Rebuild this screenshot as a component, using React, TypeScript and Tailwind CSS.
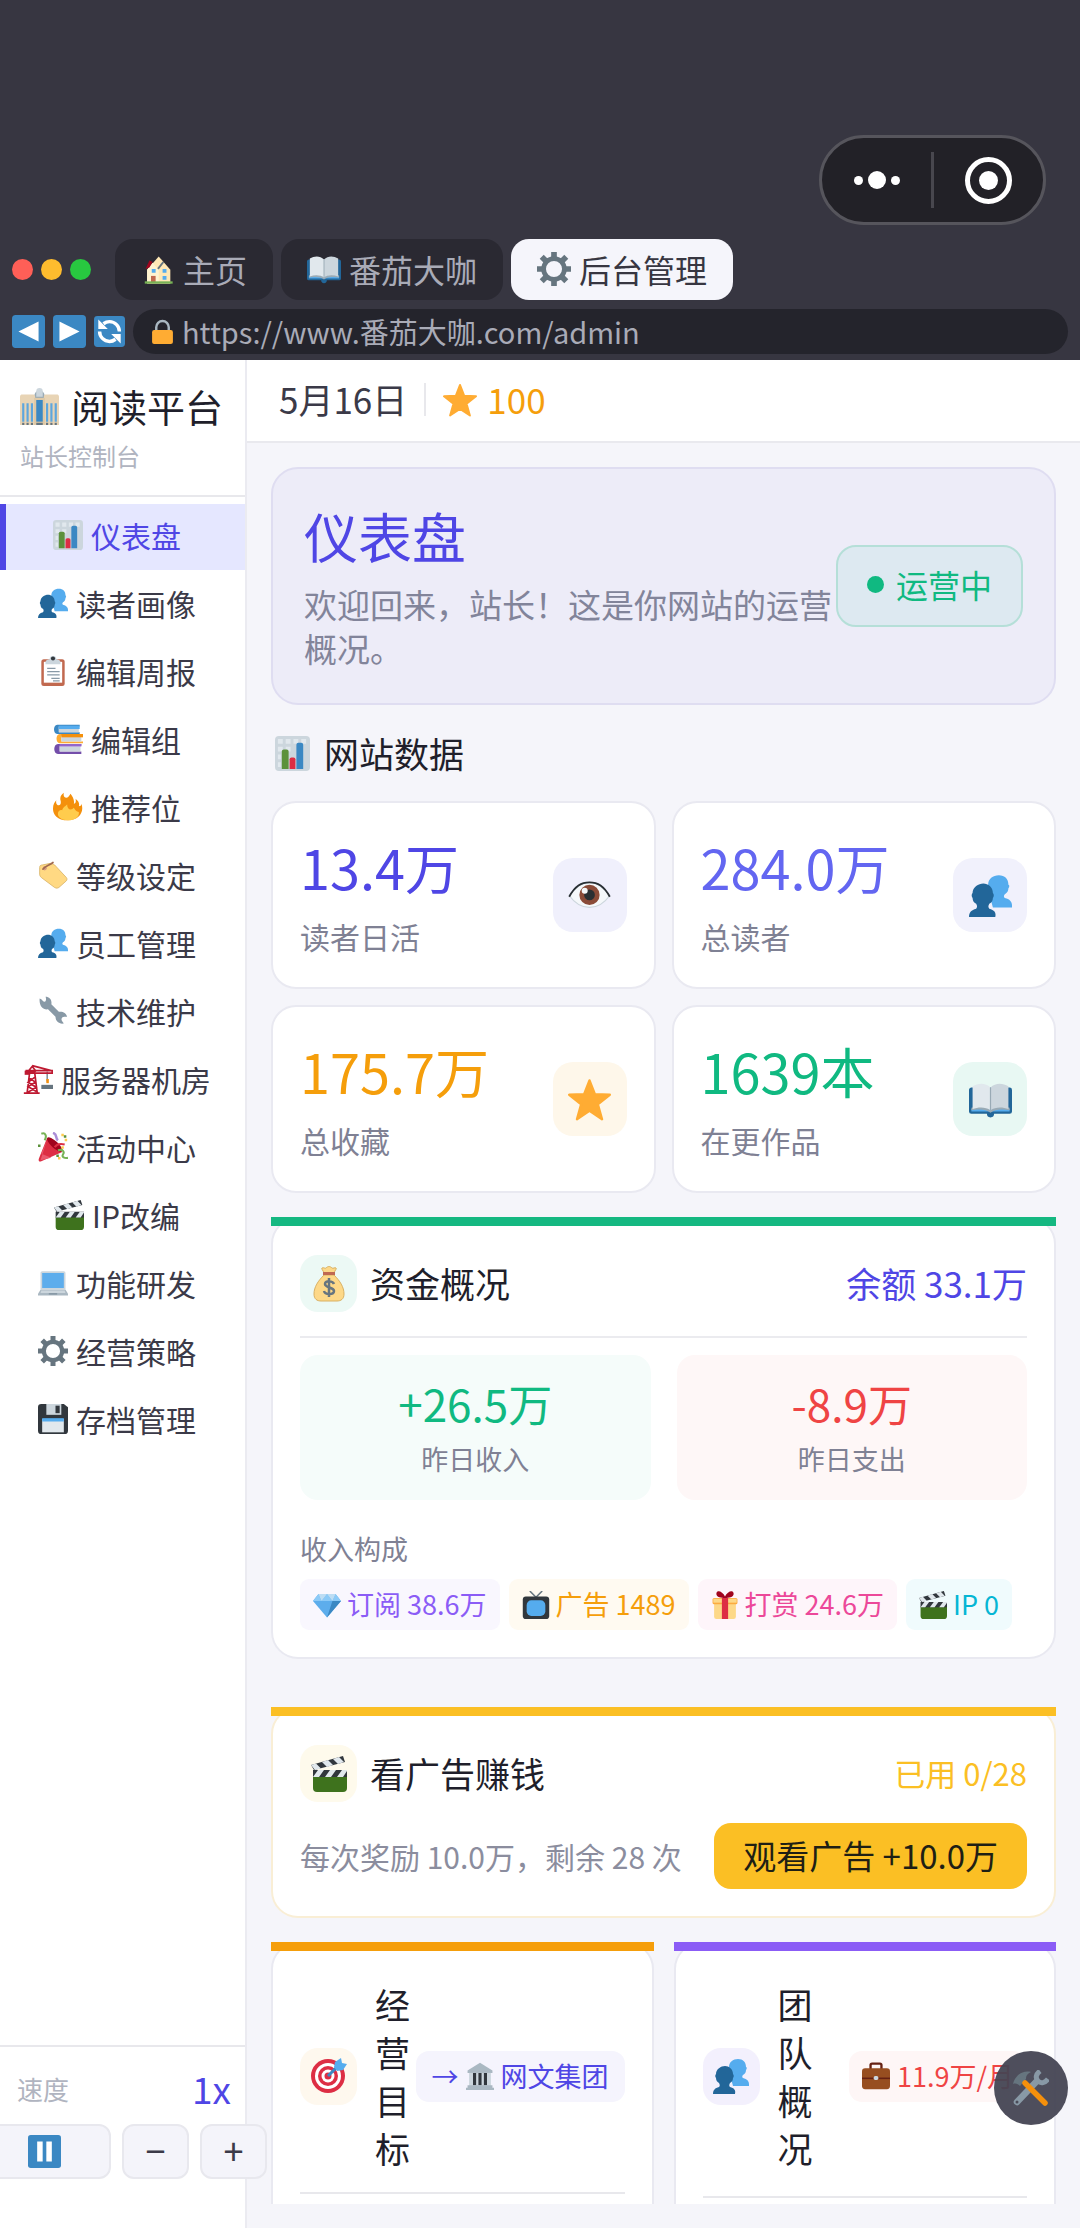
import type { ReactNode } from "react";

const ICONS: Record<string, ReactNode> = {
  house: (
    <g transform="translate(4 4) scale(.82)">
      <path fill="#ffe8b6" d="M3 18 18 1l15 17v18H3z" />
      <path fill="#fff3d0" d="M3 18 10 9l8 9v16H3z" />
      <path fill="none" stroke="#66757f" strokeWidth="2.500" d="m17 17 7-9" />
      <path fill="#a0041e" d="m1 17 5-11 4 2-4 7z" />
      <path fill="#c1694f" d="M8 26h6v8H8z" />
      <path fill="#55acee" d="M9 17h5v5H9zM23 17h5v5h-5zM23 26h5v5h-5z" />
      <path fill="#77b255" d="M0 33h36v3H0z" />
    </g>
  ),
  book: (
    <>
      <path fill="#226699" d="M2 8h32a2 2 0 0 1 2 2v18a2 2 0 0 1-2 2H21a3 3 0 0 1-6 0H2a2 2 0 0 1-2-2V10c0-1 1-2 2-2z" />
      <path fill="#55acee" d="M2 26h32v2H2z" />
      <path fill="#99aab5" d="M2 25c6-2 12-2 16 2 4-4 10-4 16-2v2c-6-1-12-1-16 2-4-3-10-3-16-2z" />
      <path fill="#e1e8ed" d="M18 8C14 4 8 4 3 7v19c5-2 11-2 15 1z" />
      <path fill="#ccd6dd" d="M18 8c4-4 10-4 15-1v19c-5-2-11-2-15 1z" />
      <path fill="none" stroke="#99aab5" d="M18 8v19" />
    </>
  ),
  gear: (
    <g fill="none" stroke="#66757f">
      <circle cx="18" cy="18" r="11" strokeWidth="5" />
      <path
        strokeWidth="6"
        d="M18 6V0M18 30v6M6 18H0M30 18h6M9.500 9.500 5 5M26.500 26.500 31 31M26.500 9.500 31 5M9.500 26.500 5 31"
      />
    </g>
  ),
  back: (
    <>
      <rect width="36" height="36" rx="4" fill="#3b88c3" />
      <path fill="#fff" d="M29 7v22L7 18z" />
    </>
  ),
  forward: (
    <>
      <rect width="36" height="36" rx="4" fill="#3b88c3" />
      <path fill="#fff" d="M7 7v22l22-11z" />
    </>
  ),
  reload: (
    <>
      <rect width="36" height="36" rx="4" fill="#3b88c3" />
      <path
        fill="none"
        stroke="#fff"
        strokeWidth="4"
        d="M6.500 18c0 6 5 11.500 11.500 11.500 2.500 0 5-1 7-2.500M29.500 18c0-6-5-11.500-11.500-11.500-2.500 0-5 1-7 2.500"
      />
      <path fill="#fff" d="M5 4v11h11zM31 32V21H20z" />
    </>
  ),
  lock: (
    <>
      <path fill="none" stroke="#aab8c2" strokeWidth="3.500" d="M9 18v-6a9 9 0 0 1 18 0v6" />
      <rect x="3" y="16" width="30" height="20" rx="3" fill="#ffac33" />
    </>
  ),
  office: (
    <>
      <path fill="#99aab5" d="M13 9a5 6 0 0 1 10 0v5H13z" />
      <path fill="#ccd6dd" d="M15 4a3 3 0 0 1 6 0v5h-6z" />
      <path fill="#e8d4b5" d="M0 9c0-1.500 1-2 2-2h10c1 0 2 .5 2 2v26H0zM22 9c0-1.500 1-2 2-2h10c1 0 2 .5 2 2v26H22z" />
      <path fill="#dfc9a6" d="M13 10h10v25H13z" />
      <path fill="#5da6dd" d="M2 15h2v17H2zM6 15h2v17H6zM10 15h2v17h-2zM24 15h2v17h-2zM28 15h2v17h-2zM32 15h2v17h-2z" />
      <path fill="#3b88c3" d="M15 12h6v20h-6z" />
      <path fill="#66757f" d="M2 33h2v2H2zM6 33h2v2H6zM10 33h2v2h-2zM15 33h6v2h-6zM24 33h2v2h-2zM28 33h2v2h-2zM32 33h2v2h-2z" />
    </>
  ),
  chart: (
    <>
      <rect width="36" height="36" rx="4" fill="#ccd6dd" />
      <path fill="#e1e8ed" d="M3 3h5v5H3zM11 3h5v5h-5zM19 3h5v5h-5zM27 3h5v5h-5zM3 11h5v5H3zM11 11h5v5h-5zM3 19h3v5H3zM3 27h3v5H3z" />
      <path fill="#5c913b" d="M7 16a2 2 0 0 1 2-2h3a2 2 0 0 1 2 2v18H7z" />
      <path fill="#dd2e44" d="M15 24a2 2 0 0 1 2-2h2a2 2 0 0 1 2 2v10h-6z" />
      <path fill="#3b88c3" d="M22 9a2 2 0 0 1 2-2h3a2 2 0 0 1 2 2v25h-7z" />
    </>
  ),
  people: (
    <>
      <path fill="#55acee" d="M36 26c0-3-2-5-6-6-1-.5-1-2 0-3 2-1 3-3 3-5 1-1 1-3 0-3 0-5-3-8-8-8s-9 3-9 8c-1 1 0 3 0 4l4 15h16z" />
      <path fill="#226699" d="M22 36c1-4-1-6-5-7-1-1-1-2 0-4 2-1 3-3 3-5 1-1 1-3 0-4 0-5-4-8-8-8s-9 3-9 8c-1 1-1 3 0 4 0 2 1 4 3 5 1 2 1 3 0 4-4 1-6 3-6 7z" />
    </>
  ),
  clipboard: (
    <>
      <rect x="4" y="4" width="28" height="32" rx="3" fill="#c1694f" />
      <path fill="#fff" d="M7 7h22v25H7z" />
      <path fill="#ccd6dd" d="M9 8c0-3 3-4 5-4a4 4 0 0 1 8 0c2 0 5 1 5 4v2H9z" />
      <circle cx="18" cy="3" r="2.500" fill="#31373d" />
      <path fill="#8899a6" d="M11 14h10v1.500H11zM11 18h15v1.500H11zM11 22h15v1.500H11zM16 26h10v1.500H16zM18 29h8v1.500h-8z" />
    </>
  ),
  books: (
    <>
      <path fill="#3b88c3" d="M5 1h27v2H7v7h25v2H5C0 12 0 1 5 1z" />
      <path fill="#ccd6dd" d="M7 3h24v7H7z" />
      <path fill="#55acee" d="M7 2h25v4H7z" />
      <path fill="#ffac33" d="M8 12h28v2H10v7h26v2H8c-5 0-5-11 0-11z" />
      <path fill="#ccd6dd" d="M10 14h24v7H10z" />
      <path fill="#f4900c" d="M10 12h26v4H10z" />
      <path fill="#744eaa" d="M6 24h28v2H8v7h26v3H6c-6 0-6-12 0-12z" />
      <path fill="#ccd6dd" d="M8 27h25v6H8z" />
      <path fill="#9266cc" d="M8 24h26v3H8z" />
    </>
  ),
  fire: (
    <>
      <path fill="#f4900c" d="M0 20c0-5 2-8 4-10-1 4 1 6 3 6s3-3 2-6c-1-4 1-7 4-9-1 4 1 6 3 6s3-2 5-5c3 4 5 8 4 12 2 0 3-3 2-6 4 3 5 6 4 9 2 0 3-1 3-3 4 10-3 20-16 20S0 27 0 20z" />
      <path fill="#ffcc4d" d="M6 25c1-3 3-4 5-3 1-4 4-5 6-7 0 4 2 6 4 6s3-1 4-2c2 3 3 5 6 5 1 6-5 10-13 10S5 30 6 25z" />
    </>
  ),
  tag: (
    <>
      <path fill="#ffd983" stroke="#d9b367" d="M2 9c0-2 1-3 3-3l10-2c2 0 3 1 5 2l14 15c1 1 1 3 0 4l-9 8c-2 1-3 1-5 0L4 21c-1-1-2-2-2-4z" />
      <circle cx="8" cy="10" r="2.500" fill="#d99e82" />
      <path fill="none" stroke="#a0694f" strokeWidth="2" strokeLinecap="round" d="M6 11C8 7 13 7 18 3" />
    </>
  ),
  wrench: (
    <path fill="#8899a6" d="M2 3c3 1 4 4 6 4 2-1 2-4 1-6 5 0 8 4 7 9l9 9c4-1 9 1 10 6-2 0-4-1-6 1-2 2 0 4 2 7-5 1-10-2-10-8l-9-9C6 17 1 12 2 3z" />
  ),
  crane: (
    <>
      <path fill="#66757f" d="M22 25h14v5H22z" />
      <path fill="none" stroke="#66757f" strokeWidth="1.500" d="M29 9v12" />
      <path fill="#f4900c" d="M28 18h3v5h-3z" />
      <path
        fill="none"
        stroke="#be1931"
        strokeWidth="2"
        d="M4 8h31v3H4zM6 9l5-6 5 6M11 2l23 6M5 34 8 10h6l3 24M7 16l8 6-9 5 10 6M14 16l-8 6 10 6-10 6M1 35h19"
      />
      <path fill="#be1931" d="M2 8h6v5H2z" />
    </>
  ),
  party: (
    <>
      <path fill="#dd2e44" d="M11 7c6 4 13 10 18 17L4 35c-2 1-4 0-3-3z" />
      <path fill="#ea596e" d="m11 9-7 17 12 5L3 34z" />
      <ellipse cx="20" cy="15" rx="4" ry="12" fill="#a0041e" transform="rotate(-47 20 15)" />
      <path fill="none" stroke="#77b255" strokeWidth="2.500" d="M4 2c5-2 7 3 4 8M24 22c6-2 8 2 6 5s2 5 6 4" />
      <path fill="none" stroke="#aa8ed6" strokeWidth="3" d="M18 1c6 2 2 6 6 9" />
      <path fill="none" stroke="#dd2e44" strokeWidth="2.500" d="M20 18c3-4 8-4 12-3" />
      <path fill="#ffcc4d" d="M28 2h3v3h-3zM32 8h3v3h-3zM28 17h3v3h-3zM24 30h3v3h-3z" />
      <path fill="#5c913b" d="M31 4h3v3h-3zM22 27h3v3h-3zM0 15h3v3H0z" />
    </>
  ),
  clapper: (
    <>
      <path fill="#3e721d" d="M2 20h34v12a4 4 0 0 1-4 4H6a4 4 0 0 1-4-4z" />
      <path fill="#31373d" d="M2 14h34v7H2zM0 9 32 0l2 6L3 14z" />
      <path fill="#e1e8ed" d="m7 14-5 7h6l5-7zM19 14l-5 7h6l5-7zM31 14l-5 7h6l4-6v-1zM0 9l5-1.500 5 5-6 1.500zM11 6l6-2 5 5-6 2zM22 3l6-2 5 5-6 2z" />
    </>
  ),
  laptop: (
    <>
      <path fill="#ccd6dd" d="M5 4h26a2 2 0 0 1 2 2v20H3V6c0-1 1-2 2-2z" />
      <path fill="#5dadec" d="M5 6h26v18H5z" />
      <path fill="#aab8c2" d="M3 26h30l3 5v2H0v-2z" />
      <path fill="#ccd6dd" d="M4 27h28l1 3H3z" />
      <path fill="#8899a6" d="M13 30h10v2H13z" />
    </>
  ),
  floppy: (
    <>
      <path fill="#31373d" d="M4 0h27l5 4v28a4 4 0 0 1-4 4H4a4 4 0 0 1-4-4V4a4 4 0 0 1 4-4z" />
      <path fill="#ccd6dd" d="M10 0h18v13H10z" />
      <path fill="#31373d" d="M21 2h5v9h-5z" />
      <path fill="#e1e8ed" d="M5 18h26v16H5z" />
      <path fill="#55acee" d="M5 17h26v4H5z" />
    </>
  ),
  star: (
    <path
      fill="#ffac33"
      stroke="#ffac33"
      strokeWidth="2"
      strokeLinejoin="round"
      d="m18 2 4.500 11.500L35 14l-10 8 3.500 12.500L18 27.500 7.500 34.500 11 22 1 14l12.500-.5z"
    />
  ),
  eye: (
    <>
      <path fill="#f5f8fa" stroke="#ccd6dd" d="M1 18c6-8 11-11 17-11s11 3 17 11c-5 7-11 10-17 10S6 25 1 18z" />
      <circle cx="18" cy="17.500" r="8.500" fill="#8a4b38" />
      <circle cx="18" cy="17.500" r="4.500" fill="#292f33" />
      <circle cx="14" cy="14" r="2.500" fill="#f5f8fa" />
      <path fill="none" stroke="#292f33" strokeWidth="1.500" d="M1 19C6 10 11 7 18 7s12 3 17 12" />
    </>
  ),
  money: (
    <>
      <path fill="#fdd888" stroke="#d9b062" d="M13 9h10c6 6 10 12 10 19 0 5-3 7-7 7H10c-4 0-7-2-7-7 0-7 4-13 10-19z" />
      <path fill="#fdd888" stroke="#d9b062" d="M13 7c-1-3-3-4-2-5 2-1 3 1 4 0 2-2 4-2 6 0 1 1 3-1 4 0 1 1-1 2-2 5z" />
      <path fill="#bf6952" d="M12 6h12v3H12z" />
      <path fill="none" stroke="#67757f" strokeWidth="2.500" d="M23 18c-1-3-9-4-9 0s9 3 9 7-9 4-10 0M18 12v19" />
    </>
  ),
  gem: (
    <>
      <path fill="#5dadec" d="m0 13 7-9h22l7 9-18 21z" />
      <path fill="#8ccaf7" d="m7 4 4 9H0zM29 4l-4 9h11zM11 13h14L18 4z" />
      <path fill="#bdddf4" d="M7 4h11l-7 9zM18 4h11l-4 9z" />
      <path fill="#3b88c3" d="M25 13h11L18 34z" />
    </>
  ),
  tv: (
    <>
      <path fill="none" stroke="#66757f" strokeWidth="2" d="m10 0 8 8 8-8" />
      <rect x="1" y="7" width="34" height="29" rx="4" fill="#31373d" />
      <rect x="6" y="12" width="24" height="20" rx="6" fill="#55acee" />
    </>
  ),
  gift: (
    <>
      <path fill="#fdd888" d="M4 16h28v17a3 3 0 0 1-3 3H7a3 3 0 0 1-3-3z" />
      <rect x="2" y="9" width="32" height="8" rx="2" fill="#fcab40" />
      <path fill="#fdd888" d="M3 10h30v5H3z" />
      <path fill="#dd2e44" d="M14 9h8v27h-8z" />
      <path fill="#a0041e" d="M18 9C13 9 6 8 7 3s8-2 11 4c3-6 10-9 11-4s-6 6-11 6z" />
    </>
  ),
  target: (
    <>
      <circle cx="17" cy="18" r="17" fill="#dd2e44" />
      <circle cx="17" cy="18" r="13" fill="#fff" />
      <circle cx="17" cy="18" r="10" fill="#dd2e44" />
      <circle cx="17" cy="18" r="6.500" fill="#fff" />
      <circle cx="17" cy="18" r="3.500" fill="#dd2e44" />
      <path fill="none" stroke="#3b88c3" strokeWidth="3" d="m17 18 11-11" />
      <path fill="#55acee" d="m23 9 1-5 6-4 1 5 5 1-4 6-6 1z" />
    </>
  ),
  museum: (
    <>
      <path fill="#aab8c2" d="M2 11 18 1l16 10v3H2z" />
      <path fill="#ccd6dd" d="M4 14h28v17H4z" />
      <path fill="#31373d" d="M9 14h4v16H9zM16 14h4v16h-4zM23 14h4v16h-4z" />
      <path fill="#aab8c2" d="M2 30h32v3H2zM0 33h36v3H0z" />
    </>
  ),
  briefcase: (
    <>
      <path fill="none" stroke="#662113" strokeWidth="3" d="M11 9V4a2 2 0 0 1 2-2h10a2 2 0 0 1 2 2v5" />
      <rect y="8" width="36" height="27" rx="4" fill="#974e20" />
      <path fill="#662113" d="M0 20h36v2H0z" />
      <rect x="15" y="18" width="6" height="5" rx="2" fill="#ccd6dd" />
    </>
  ),
  tools: (
    <>
      <path fill="none" stroke="#8899a6" strokeWidth="6.500" strokeLinecap="round" d="M4 32 23 12" />
      <path fill="none" stroke="#8899a6" strokeWidth="5" d="M27 1c-4 3-5 7-2 10s7 2 10-2" />
      <circle cx="4" cy="32" r="1.500" fill="#4a4a58" />
      <path fill="#66757f" d="M0 14C2 6 9 0 18 2c-4 2-5 4-5 7l-6 7c-2-2-4-3-7-2z" />
      <path fill="none" stroke="#f4900c" strokeWidth="5.500" strokeLinecap="round" d="m12 13 20 20" />
    </>
  ),
  pause: (
    <>
      <rect width="36" height="36" rx="3" fill="#3b88c3" />
      <path fill="#fff" d="M10 7h6v22h-6zM20 7h6v22h-6z" />
    </>
  ),
};

function Icon({ name, className }: { name: string; className: string }) {
  return (
    <svg viewBox="0 0 36 36" aria-hidden="true" className={`shrink-0 ${className}`}>
      {ICONS[name]}
    </svg>
  );
}

const TABS = [
  { icon: "house", label: "主页", active: false },
  { icon: "book", label: "番茄大咖", active: false },
  { icon: "gear", label: "后台管理", active: true },
];

const NAV = [
  { icon: "chart", label: "仪表盘" },
  { icon: "people", label: "读者画像" },
  { icon: "clipboard", label: "编辑周报" },
  { icon: "books", label: "编辑组" },
  { icon: "fire", label: "推荐位" },
  { icon: "tag", label: "等级设定" },
  { icon: "people", label: "员工管理" },
  { icon: "wrench", label: "技术维护" },
  { icon: "crane", label: "服务器机房" },
  { icon: "party", label: "活动中心" },
  { icon: "clapper", label: "IP改编" },
  { icon: "laptop", label: "功能研发" },
  { icon: "gear", label: "经营策略" },
  { icon: "floppy", label: "存档管理" },
];

const STATS = [
  { value: "13.4万", label: "读者日活", icon: "eye", color: "text-[#4f46e5]", bg: "bg-[#f0f0fc]" },
  { value: "284.0万", label: "总读者", icon: "people", color: "text-[#6366f1]", bg: "bg-[#f1f1fc]" },
  { value: "175.7万", label: "总收藏", icon: "star", color: "text-[#f59e0b]", bg: "bg-[#fef7ea]" },
  { value: "1639本", label: "在更作品", icon: "book", color: "text-[#10b981]", bg: "bg-[#e8f8f3]" },
];

const INCOME = [
  { icon: "gem", label: "订阅 38.6万", style: "bg-[#f9f7fe] text-[#8b5cf6]" },
  { icon: "tv", label: "广告 1489", style: "bg-[#fffaf1] text-[#f59e0b]" },
  { icon: "gift", label: "打赏 24.6万", style: "bg-[#fef5fa] text-[#ec4899]" },
  { icon: "clapper", label: "IP 0", style: "bg-[#f0fbfd] text-[#06b6d4]" },
];

function Browser() {
  return (
    <header className="flex h-[360px] shrink-0 flex-col bg-[#373641]">
      <div className="flex justify-end pt-[135px] pr-[34px]">
        <div className="flex h-[90px] w-[227px] items-center rounded-full border-[3px] border-[#56555c] bg-[#222127]">
          <button aria-label="更多" className="flex flex-1 items-center justify-center gap-[5px]">
            <span className="size-[9px] rounded-full bg-white" />
            <span className="size-[18px] rounded-full bg-white" />
            <span className="size-[9px] rounded-full bg-white" />
          </button>
          <span className="h-14 w-[3px] bg-[#48474e]" />
          <button aria-label="关闭" className="flex flex-1 items-center justify-center">
            <span className="flex size-[47px] items-center justify-center rounded-full border-[5px] border-white">
              <span className="size-[19px] rounded-full bg-white" />
            </span>
          </button>
        </div>
      </div>
      <div className="mt-[14px] flex items-center gap-2 pl-3">
        <div className="mr-4 flex gap-2">
          <span className="size-[21px] rounded-full bg-[#ff5f57]" />
          <span className="size-[21px] rounded-full bg-[#febc2e]" />
          <span className="size-[21px] rounded-full bg-[#28c840]" />
        </div>
        {TABS.map((t) => (
          <button
            key={t.label}
            className={`flex h-[61px] items-center gap-2 rounded-[18px] px-[26px] pb-[2px] text-[32px] leading-[44px] ${
              t.active ? "bg-[#f5f5fb] text-[#373641]" : "bg-[#2a2932] text-[#a9abb7]"
            }`}
          >
            <Icon name={t.icon} className="size-[34px]" />
            {t.label}
          </button>
        ))}
      </div>
      <div className="mt-[9px] flex items-center gap-2 px-3">
        <button aria-label="后退">
          <Icon name="back" className="size-[33px]" />
        </button>
        <button aria-label="前进">
          <Icon name="forward" className="size-[33px]" />
        </button>
        <button aria-label="刷新">
          <Icon name="reload" className="size-[31px]" />
        </button>
        <div className="flex h-[45px] flex-1 items-center gap-[7px] rounded-full bg-[#24242c] pl-[17px] pr-4">
          <Icon name="lock" className="size-[25px]" />
          <input
            aria-label="网址"
            readOnly
            value="https://www.番茄大咖.com/admin"
            className="h-[45px] min-w-0 flex-1 bg-transparent pb-[2px] text-[29px] text-[#a9abb7] outline-none"
          />
        </div>
      </div>
    </header>
  );
}

function Sidebar() {
  return (
    <aside className="relative z-10 flex w-[247px] shrink-0 flex-col border-r-2 border-[#ebebf1] bg-white">
      <div className="border-b-2 border-[#e8e8ec] pt-5 pb-[22px] pl-5">
        <div className="flex items-center gap-3 whitespace-nowrap text-[38px] leading-[52px] text-[#1f1f2b]">
          <Icon name="office" className="size-[39px]" />
          阅读平台
        </div>
        <p className="mt-[7px] text-[24px] leading-[34px] text-[#b0b4c0]">站长控制台</p>
      </div>
      <nav className="mt-[7px] flex flex-col gap-[2px]">
        {NAV.map((item, i) => (
          <button
            key={item.label}
            className={`flex h-[66px] items-center justify-center gap-2 whitespace-nowrap border-l-[6px] pr-[17px] pb-1 text-[30px] leading-[42px] ${
              i === 0
                ? "border-[#4f46e5] bg-[#e5e7ff] text-[#4f46e5]"
                : "border-transparent text-[#3b3a48]"
            }`}
          >
            <Icon name={item.icon} className="size-[30px]" />
            {item.label}
          </button>
        ))}
      </nav>
      <div className="mt-auto border-t-2 border-[#e8e8ec] pt-4 pb-[49px]">
        <div className="flex items-center justify-between pl-[17px] pr-[14px]">
          <span className="text-[26px] text-[#b0b4c0]">速度</span>
          <span className="text-[37px] leading-[50px] text-[#4f46e5]">1x</span>
        </div>
        <div className="mt-[11px] flex justify-center gap-[11px] text-[36px] leading-[40px] text-[#3b3a48]">
          <button
            aria-label="暂停"
            className="flex h-[55px] w-[133px] shrink-0 items-center justify-center rounded-[12px] border-2 border-[#e8e8ee] bg-[#f4f4fa]"
          >
            <Icon name="pause" className="size-[33px]" />
          </button>
          {["−", "+"].map((sign) => (
            <button
              key={sign}
              className="flex h-[55px] w-[67px] shrink-0 items-center justify-center rounded-[12px] border-2 border-[#e8e8ee] bg-[#f4f4fa] pb-[6px]"
            >
              {sign}
            </button>
          ))}
        </div>
      </div>
    </aside>
  );
}

function Card({ bar, border, children }: { bar: string; border: string; children: ReactNode }) {
  return (
    <section className={`relative min-w-0 rounded-[27px] border-2 bg-white px-[27px] pt-9 pb-[27px] ${border}`}>
      <span className={`absolute -inset-x-[2px] -top-[2px] h-[9px] ${bar}`} />
      {children}
    </section>
  );
}

function CardIcon({ name, bg }: { name: string; bg: string }) {
  return (
    <span className={`flex size-[57px] shrink-0 items-center justify-center rounded-[18px] ${bg}`}>
      <Icon name={name} className="size-[36px]" />
    </span>
  );
}

function Dashboard() {
  return (
    <div className="min-h-0 flex-1 overflow-hidden">
      <section className="flex items-center rounded-[27px] border-2 border-[#dfddf1] bg-[#edecf8] py-[33px] px-[31px]">
        <div className="flex-1">
          <h1 className="text-[54px] leading-[68px] text-[#4f46e5]">仪表盘</h1>
          <p className="mt-3 text-[33px] leading-[44px] text-[#82849a]">
            欢迎回来，站长！这是你网站的运营概况。
          </p>
        </div>
        <div className="flex h-[82px] shrink-0 items-center gap-3 rounded-[20px] border-2 border-[#b5dfd8] bg-[#dde9f1] px-[29px] pb-1 text-[32px] text-[#10b981]">
          <span className="size-[17px] rounded-full bg-[#10b981]" />
          运营中
        </div>
      </section>

      <h2 className="mt-6 flex items-center gap-[14px] pl-1 text-[35px] leading-[48px] text-[#1f1f2b]">
        <Icon name="chart" className="size-[35px]" />
        网站数据
      </h2>

      <div className="mt-6 grid grid-cols-2 gap-4">
        {STATS.map((s) => (
          <div
            key={s.label}
            className="flex h-[188px] items-center justify-between rounded-[25px] border-2 border-[#e9e9f1] bg-white px-[27px]"
          >
            <div className="pb-[2px]">
              <div className={`text-[54px] leading-[72px] ${s.color}`}>{s.value}</div>
              <div className="mt-3 text-[30px] leading-[42px] text-[#7f8194]">{s.label}</div>
            </div>
            <span className={`flex size-[74px] items-center justify-center rounded-[20px] ${s.bg}`}>
              <Icon name={s.icon} className="size-[43px]" />
            </span>
          </div>
        ))}
      </div>

      <div className="mt-6">
        <Card bar="bg-[#15b881]" border="border-[#e9e9f1]">
          <div className="flex items-center border-b-2 border-[#ebebef] pb-6">
            <CardIcon name="money" bg="bg-[#ecf9f5]" />
            <h3 className="ml-[13px] flex-1 pb-[2px] text-[35px] leading-[48px] text-[#1f1f2b]">资金概况</h3>
            <span className="pb-[2px] text-[35px] leading-[48px] text-[#4f46e5]">余额 33.1万</span>
          </div>
          <div className="mt-[17px] grid grid-cols-2 gap-[26px] text-center">
            <div className="rounded-[18px] bg-[#f5fcfa] pt-5 pb-[21px]">
              <div className="text-[44px] leading-[56px] text-[#10b981]">+26.5万</div>
              <div className="mt-2 text-[27px] leading-[40px] text-[#7f8194]">昨日收入</div>
            </div>
            <div className="rounded-[18px] bg-[#fef7f7] pt-5 pb-[21px]">
              <div className="text-[44px] leading-[56px] text-[#ef4444]">-8.9万</div>
              <div className="mt-2 text-[27px] leading-[40px] text-[#7f8194]">昨日支出</div>
            </div>
          </div>
          <p className="mt-[27px] text-[27px] leading-[44px] text-[#7f8194]">收入构成</p>
          <div className="mt-2 flex gap-[9px]">
            {INCOME.map((c) => (
              <span
                key={c.label}
                className={`flex h-[51px] items-center gap-[6px] whitespace-nowrap rounded-[9px] px-[13px] text-[27px] ${c.style}`}
              >
                <Icon name={c.icon} className="size-[28px]" />
                {c.label}
              </span>
            ))}
          </div>
        </Card>
      </div>

      <div className="mt-12">
        <Card bar="bg-[#fbbf24]" border="border-[#f9eed5]">
          <div className="flex items-center">
            <CardIcon name="clapper" bg="bg-[#fefaec]" />
            <h3 className="ml-[13px] flex-1 pb-[2px] text-[35px] leading-[48px] text-[#1f1f2b]">看广告赚钱</h3>
            <span className="pb-[2px] text-[31px] leading-[44px] text-[#fbbf24]">已用 0/28</span>
          </div>
          <div className="mt-[21px] flex items-center justify-between">
            <span className="text-[30px] text-[#8b8d9e]">每次奖励 10.0万，剩余 28 次</span>
            <button className="h-[66px] rounded-[17px] bg-[#fbbf24] px-[29px] pb-[2px] text-[33px] leading-[46px] text-[#1f1f14]">
              观看广告 +10.0万
            </button>
          </div>
        </Card>
      </div>

      <div className="mt-6 grid grid-cols-2 gap-5">
        <Card bar="bg-[#f59e0b]" border="border-[#e9e9f1]">
          <div className="flex items-center border-b-2 border-[#e8e8ec] pb-5">
            <CardIcon name="target" bg="bg-[#fef8ee]" />
            <h3 className="ml-[13px] w-[45px] text-center text-[35px] leading-[48px] text-[#1f1f2b]">经营目标</h3>
            <button className="ml-auto flex h-[51px] items-center gap-[7px] whitespace-nowrap rounded-[13px] bg-[#f5f4fd] px-4 text-[27px] text-[#4f46e5]">
              → <Icon name="museum" className="size-[28px]" />
              网文集团
            </button>
          </div>
          <div className="h-20" />
        </Card>
        <Card bar="bg-[#8b5cf6]" border="border-[#e9e9f1]">
          <div className="flex items-center border-b-2 border-[#e8e8ec] pb-6">
            <CardIcon name="people" bg="bg-[#f3f0fd]" />
            <h3 className="ml-[13px] w-[45px] text-center text-[35px] leading-[48px] text-[#1f1f2b]">团队概况</h3>
            <span className="ml-auto flex h-[51px] items-center gap-[7px] whitespace-nowrap rounded-[13px] bg-[#fef6f6] px-[13px] text-[27px] text-[#ef4444]">
              <Icon name="briefcase" className="size-[28px]" />
              11.9万/月
            </span>
          </div>
          <div className="h-20" />
        </Card>
      </div>
    </div>
  );
}

export default function App() {
  return (
    <div className="flex h-screen flex-col overflow-hidden bg-[#f5f5fa] font-['Noto_Sans_CJK_SC',sans-serif]">
      <Browser />
      <div className="flex min-h-0 flex-1">
        <Sidebar />
        <div className="flex min-w-0 flex-1 flex-col">
          <div className="flex h-[83px] shrink-0 items-center border-b-2 border-[#e9e9ee] bg-white pl-8 pb-[2px] text-[35px] text-[#3b3a48]">
            <span>5月16日</span>
            <span className="mx-[17px] h-[33px] w-[2px] bg-[#e8e8ec]" />
            <Icon name="star" className="size-[34px]" />
            <span className="ml-[10px] text-[#f59e0b]">100</span>
          </div>
          <main className="flex min-h-0 flex-1 flex-col p-6">
            <Dashboard />
          </main>
        </div>
      </div>
      <button
        aria-label="工具"
        className="fixed right-3 bottom-[103px] z-20 flex size-[74px] items-center justify-center rounded-full bg-[#454453]/95"
      >
        <Icon name="tools" className="size-[36px]" />
      </button>
    </div>
  );
}
